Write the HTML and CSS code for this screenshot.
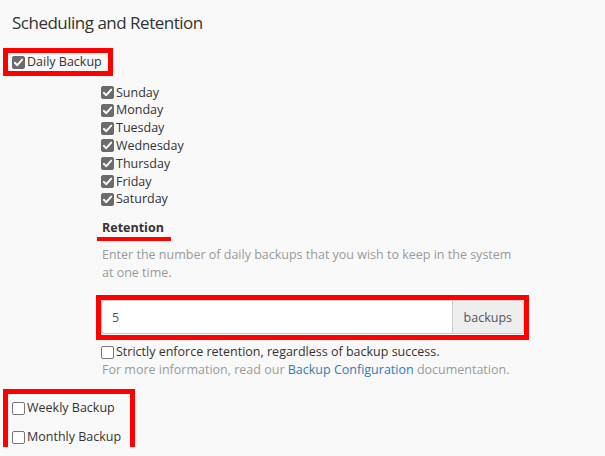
FILE: index.html
```html
<!DOCTYPE html>
<html>
<head>
<meta charset="utf-8">
<link rel="stylesheet" href="styles.css">
</head>
<body>
<div class="page">
  <h2 class="title">Scheduling and Retention</h2>
  <div class="daily-row">
    <label class="check mark daily"><input type="checkbox" checked>Daily Backup</label>
  </div>
  <div class="sub">
    <div class="days">
      <label class="check day"><input type="checkbox" checked>Sunday</label>
      <label class="check day"><input type="checkbox" checked>Monday</label>
      <label class="check day"><input type="checkbox" checked>Tuesday</label>
      <label class="check day"><input type="checkbox" checked>Wednesday</label>
      <label class="check day"><input type="checkbox" checked>Thursday</label>
      <label class="check day"><input type="checkbox" checked>Friday</label>
      <label class="check day"><input type="checkbox" checked>Saturday</label>
    </div>
    <h3 class="ret"><span class="underline">Retention</span></h3>
    <p class="help">Enter the number of daily backups that you wish to keep in the system at one time.</p>
    <div class="input-group mark">
      <input class="field" type="text" value="5">
      <span class="addon">backups</span>
    </div>
    <label class="check strict"><input type="checkbox">Strictly enforce retention, regardless of backup success.</label>
    <p class="help more">For more information, read our <a href="#">Backup Configuration</a> documentation.</p>
  </div>
  <div class="others mark">
    <label class="check other"><input type="checkbox">Weekly Backup</label>
    <label class="check other"><input type="checkbox">Monthly Backup</label>
  </div>
</div>
</body>
</html>
```
FILE: styles.css
```css
html, body {
  margin: 0;
  padding: 0;
  background: #f9f9f9;
}
body {
  font-family: "Open Sans", "Liberation Sans", sans-serif;
  font-size: 12.5px;
  color: #333;
}
.page {
  padding-top: 11px;
}
.title {
  margin: 0;
  padding-left: 12px;
  font-size: 17px;
  letter-spacing: -0.5px;
  line-height: 24px;
  font-weight: 400;
  color: #333;
}
.mark {
  outline: 5px solid #ff0000;
}
.daily-row {
  margin-top: 18px;
  padding-left: 8px;
}
.check {
  display: flex;
  align-items: center;
  height: 18px;
  line-height: 18px;
  color: #333;
  white-space: nowrap;
}
.check input {
  appearance: none;
  -webkit-appearance: none;
  box-sizing: border-box;
  width: 13px;
  height: 13px;
  margin: 0 2px 0 0;
  border: 1px solid #777;
  border-radius: 2px;
  background: #fff;
  flex: none;
}
.check input:checked {
  border-color: #6b6b6b;
  background: #6b6b6b url("data:image/svg+xml;utf8,<svg xmlns='http://www.w3.org/2000/svg' viewBox='0 0 13 13'><path d='M2.8 6.8 L5.3 9.2 L10.2 3.6' fill='none' stroke='white' stroke-width='1.9' stroke-linecap='round' stroke-linejoin='round'/></svg>") center / 13px 13px no-repeat;
}
.daily {
  display: inline-flex;
  padding: 0 6px 0 4px;
}
.sub {
  margin-left: 101px;
  width: 423px;
  margin-top: 11px;
}
.days .day {
  height: 17.83px;
  line-height: 17.83px;
}
.ret {
  margin: 11px 0 0 0;
  font-size: 12.5px;
  font-weight: 700;
  line-height: 18px;
  color: #333;
}
.underline {
  display: inline-block;
  vertical-align: top;
  margin-left: -4px;
  padding: 0 7px 0 5px;
  border-bottom: 4px solid #ff0000;
  line-height: 18px;
}
.help {
  margin: 5px 0 0 1px;
  color: #999;
  line-height: 18px;
}
.help a {
  color: #337ab7;
  text-decoration: none;
}
.input-group {
  display: flex;
  margin-top: 18px;
  height: 35px;
  box-sizing: border-box;
}
.field {
  flex: 1;
  min-width: 0;
  box-sizing: border-box;
  height: 34px;
  margin: 0;
  padding: 0 10px;
  border: 1px solid #ccc;
  border-right: none;
  border-radius: 3px 0 0 3px;
  background: #fff;
  font-family: inherit;
  font-size: 12.5px;
  color: #555;
}
.addon {
  display: flex;
  align-items: center;
  box-sizing: border-box;
  height: 34px;
  padding: 0 11px;
  border: 1px solid #ccc;
  border-radius: 0 3px 3px 0;
  background: #eee;
  color: #555;
  font-size: 12.5px;
}
.strict {
  margin-top: 8px;
}
.more {
  margin-top: 0;
}
.others {
  margin: 15px 0 0 8px;
  width: 122px;
  height: 53px;
  box-sizing: border-box;
  padding: 5px 0 0 4px;
}
.other + .other {
  margin-top: 11px;
}
```
